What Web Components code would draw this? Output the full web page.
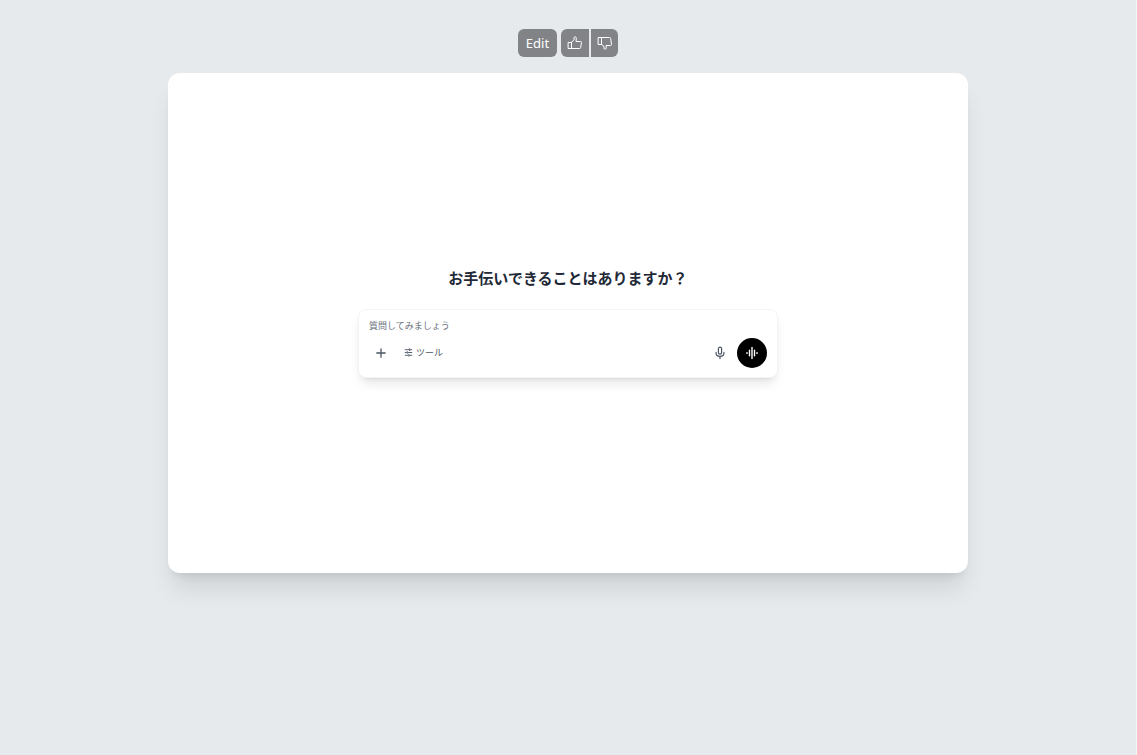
<!DOCTYPE html>
<html lang="ja">
<head>
<meta charset="utf-8">
<meta name="viewport" content="width=device-width, initial-scale=1">
<title>Chat preview</title>
<style>
  html { background: #e6eaed; }
  body { margin: 0; font-family: Inter, "Noto Sans CJK JP", sans-serif; color: #1f2937; }
</style>
</head>
<body>
<preview-page>
  <preview-toolbar slot="toolbar"></preview-toolbar>
  <chat-card>
    <span slot="title">お手伝いできることはありますか？</span>
    <chat-composer></chat-composer>
  </chat-card>
</preview-page>

<script>
const define = (name, html) => {
  const template = document.createElement('template');
  template.innerHTML = html;
  customElements.define(name, class extends HTMLElement {
    constructor() {
      super();
      this.attachShadow({ mode: 'open' }).append(template.content.cloneNode(true));
    }
  });
};

define('preview-page', `
<style>
  :host { display: flex; flex-direction: column; align-items: center; gap: 16px;
    box-sizing: border-box; min-height: 100vh; padding: 29px 16px 32px; border-right: 1px solid #f5f6f7; }
  main { width: 100%; max-width: 800px; }
</style>
<slot name="toolbar"></slot>
<main><slot></slot></main>`);

define('preview-toolbar', `
<style>
  :host { display: flex; gap: 4px; }
  .votes { display: flex; gap: 2px; }
  button { display: flex; align-items: center; justify-content: center; height: 28px; margin: 0;
    border: 0; border-radius: 6px; background: #828387; color: #fff;
    font: 13px/20px "Noto Sans", sans-serif; cursor: pointer; }
  .edit { padding: 0 8px; }
  .votes button { width: 28px; padding: 0; }
  .votes .up { border-radius: 6px 0 0 6px; }
  .votes .down { width: 27px; border-radius: 0 6px 6px 0; }
  svg { width: 16px; height: 16px; fill: none; stroke: currentColor; stroke-width: 1;
    stroke-linecap: round; stroke-linejoin: round; }
</style>
<button class="edit" type="button">Edit</button>
<div class="votes">
  <button class="up" type="button" aria-label="Good">
    <svg viewBox="0 0 16 16"><path d="M1.5 7.5h3v6h-3zM4.5 7.5 7 4.6V2.5c.3-1 2.3-1 2.3.6L9 6.5h4.6c.7 0 1 .4.9 1l-.8 5c-.1.7-.5 1-1.2 1h-8"/></svg>
  </button>
  <button class="down" type="button" aria-label="Bad">
    <svg viewBox="0 0 16 16"><path d="M1.5 2.5h3v7h-3zM4.5 9.5 7 11.4v2.1c.3 1 2.3 1 2.3-.6L9 10.5h4.6c.7 0 1-.4.9-1l-.8-6c-.1-.7-.5-1-1.2-1h-8"/></svg>
  </button>
</div>`);

define('chat-card', `
<style>
  :host { display: flex; flex-direction: column; align-items: center; justify-content: center; gap: 20px;
    box-sizing: border-box; min-height: 500px; padding: 16px; border-radius: 12px; background: #fff;
    box-shadow: 0 20px 25px -5px rgb(0 0 0 / .1), 0 8px 10px -6px rgb(0 0 0 / .1); }
  h1 { margin: 0; font-size: 15px; line-height: 20px; font-weight: 700; text-align: center; }
</style>
<h1><slot name="title"></slot></h1>
<slot></slot>`);

define('chat-composer', `
<style>
  :host { display: block; width: 100%; max-width: 420px; }
  form { display: flex; flex-direction: column; gap: 5px; box-sizing: border-box; margin: 0; padding: 9px 10px;
    border: 1px solid #f3f4f5; border-radius: 8px; background: #fff; color: #4b5563;
    box-shadow: 0 8px 12px -3px rgb(0 0 0 / .1), 0 3px 5px -3px rgb(0 0 0 / .1); }
  input { display: block; width: 100%; height: 14px; box-sizing: border-box; margin: 0; padding: 0;
    border: 0; outline: 0; background: none; color: inherit; font: inherit; font-size: 9px; }
  input::placeholder { color: #6b7280; opacity: 1; }
  .row { display: flex; align-items: center; }
  button { display: flex; align-items: center; justify-content: center; gap: 3px; height: 24px; margin: 0;
    padding: 0; border: 0; border-radius: 12px; background: none; color: inherit; font: inherit;
    font-size: 9px; line-height: 14px; cursor: pointer; }
  .icon { width: 24px; }
  .tools { margin-left: 7px; padding: 0 4px; }
  .mic { margin-left: auto; }
  .voice { width: 30px; height: 30px; margin-left: 5px; border-radius: 50%; background: #000; color: #fff; }
  svg { fill: none; stroke: currentColor; stroke-linecap: round; }
</style>
<form onsubmit="return false">
  <input type="text" aria-label="質問" placeholder="質問してみましょう">
  <div class="row">
    <button class="icon" type="button" aria-label="追加">
      <svg width="10" height="10" viewBox="0 0 10 10" stroke-width="1.3"><path d="M5 .8v8.4M.8 5h8.4"/></svg>
    </button>
    <button class="tools" type="button">
      <svg width="9" height="9" viewBox="0 0 9 9" stroke-width=".9" style="stroke-linecap:butt"><path d="M.8 1.7h4.3M6 1.7h2.2M5.6.4V3M.8 4.5h2M3.6 4.5h4.6M3.2 3.2v2.6M.8 7.3h3.3M5 7.3h3.2M4.8 6v2.6"/></svg>
      <span>ツール</span>
    </button>
    <button class="icon mic" type="button" aria-label="音声入力">
      <svg width="12" height="14" viewBox="0 0 12 14" stroke-width="1.2"><rect x="4.4" y="1.2" width="3.2" height="7" rx="1.6"/><path d="M2 6.4c0 5.2 8 5.2 8 0M6 10.4v2.2"/></svg>
    </button>
    <button class="voice" type="button" aria-label="音声モード">
      <svg width="14" height="14" viewBox="0 0 14 14" stroke-width="1.4"><path d="M2 6.6v.8M4.5 4.2v5.6M7 1.4v11.2M9.5 4.2v5.6M12 6.6v.8"/></svg>
    </button>
  </div>
</form>`);
</script>
</body>
</html>
